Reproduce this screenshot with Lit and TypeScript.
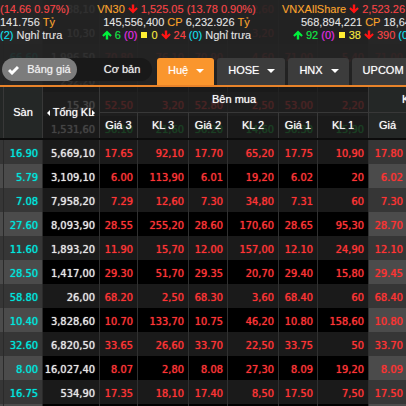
import { LitElement, html, css, svg } from "lit";
import { customElement, state } from "lit/decorators.js";

type Row = string[];

// Rows that have scrolled beneath the translucent header.
const scrolled: { tone: string; cells: Row }[] = [
  { tone: "down", cells: ["", "88,10", "", "", "", "2,60", "", "", ""] },
  { tone: "down", cells: ["", "10,30", "", "", "", "3,20", "", "", ""] },
  { tone: "down", cells: ["66.60", "1,996,50", "70.80", "76,10", "70.90", "4,60", "71.00", "5,40", "71.00"] },
  { tone: "down", cells: ["", "292,20", "", "", "", "", "", "", ""] },
  { tone: "down", cells: ["49.00", "15,30", "52.50", "3,20", "52.80", "2,50", "53.00", "2,20", ""] },
  { tone: "up", cells: ["", "1,531,60", "56.10", "21,60", "56.20", "14,60", "56.30", "15,90", ""] },
];

const quotes: Row[] = [
  ["16.90", "5,669,10", "17.65", "92,10", "17.70", "65,20", "17.75", "10,90", "17.80"],
  ["5.79", "3,109,10", "6.00", "113,90", "6.01", "19,20", "6.02", "20", "6.02"],
  ["7.08", "7,958,20", "7.29", "12,60", "7.30", "34,80", "7.31", "60", "7.30"],
  ["27.60", "8,093,90", "28.55", "255,20", "28.60", "170,60", "28.65", "95,30", "28.70"],
  ["11.60", "1,893,20", "11.90", "15,70", "12.00", "157,00", "12.10", "24,90", "12.10"],
  ["28.50", "1,417,00", "29.30", "51,70", "29.35", "20,70", "29.40", "15,80", "29.45"],
  ["58.80", "26,00", "68.20", "2,50", "68.30", "3,60", "68.40", "60", "68.40"],
  ["10.40", "3,828,60", "10.70", "133,70", "10.75", "46,20", "10.80", "158,60", "10.80"],
  ["32.60", "6,820,50", "33.65", "26,60", "33.70", "22,50", "33.75", "50", "33.70"],
  ["8.00", "16,027,40", "8.07", "2,80", "8.08", "27,30", "8.09", "19,20", "8.09"],
  ["16.75", "534,90", "17.35", "18,10", "17.40", "8,50", "17.50", "7,50", "17.50"],
  ["", "", "", "", "", "", "", "", ""],
];

const arrow = (dir: "up" | "down") => html`<svg class="arrow ${dir}" viewBox="0 0 10 10" aria-hidden="true">
  ${dir === "up"
    ? svg`<path d="M5 0.4 9.8 5.2 8.4 6.8 6.2 4.8V9.6H3.8V4.8L1.6 6.8 0.2 5.2Z" />`
    : svg`<path d="M5 9.6 9.8 4.8 8.4 3.2 6.2 5.2V0.4H3.8V5.2L1.6 3.2 0.2 4.8Z" />`}
</svg>`;

const columns = html`<colgroup>
  <col class="c-edge" /><col class="c-floor" /><col class="c-total" />
  <col class="c-price3" /><col class="c-vol" /><col class="c-price" /><col class="c-vol" />
  <col class="c-price" /><col class="c-vol" /><col class="c-match" />
</colgroup>`;

@customElement("app-root")
export class AppRoot extends LitElement {
  @state() private view = "full";
  @state() private market = "Huệ";

  static styles = css`
    :host {
      display: block;
      position: relative;
      height: 100vh;
      overflow: hidden;
      background: #000;
      color: #e6e6e6;
      font: 11px/13px "Liberation Sans", Arial, sans-serif;
    }
    * { box-sizing: border-box; }
    table {
      width: 100%;
      table-layout: fixed;
      border-collapse: separate;
      border-spacing: 0;
    }
    .c-edge { width: 4px; }
    .c-floor, .c-price { width: 39px; }
    .c-total { width: 57px; }
    .c-price3 { width: 38px; }
    .c-vol { width: 51px; }
    .c-match { width: 37px; }

    .quotes {
      margin-top: -4px;
      font-family: "DejaVu Sans Condensed", "DejaVu Sans", sans-serif;
      text-shadow: 0 0 1px currentColor;
    }
    .quotes td {
      height: 24px;
      padding: 2px 4px 0 0;
      text-align: right;
      white-space: nowrap;
      color: #ff3434;
      border-right: 1px solid #303030;
    }
    .quotes tr:nth-child(odd) td { background: #1a1a1a; }
    .quotes tr:nth-child(even) td { background: #000; }
    .quotes tr:nth-child(odd) .tint { background: #363636; }
    .quotes tr:nth-child(even) .tint { background: #4b4b4b; }
    .quotes td.tint { border-right-color: #2a2a2a; }
    .quotes .floor { color: #00e5dc; }
    .quotes .total { color: #e8e8e8; }
    .quotes .match { padding-right: 3px; border-right: 0; }
    .quotes .up td { color: #00c832; }
    .quotes .up .total { color: #e8e8e8; }

    .header {
      position: absolute;
      inset: 0 0 auto;
    }
    .top { background: rgba(36, 36, 36, 0.94); }
    .indices {
      display: grid;
      grid-template-columns: 94px 165px 1fr;
      padding-top: 2px;
      white-space: nowrap;
      overflow: hidden;
    }
    .index { min-width: 0; }
    .index p {
      display: flex;
      gap: 3px;
      margin: 0;
      line-height: 14px;
      height: 13px;
      align-items: center;
      text-shadow: 0 0 1px rgba(255, 255, 255, 0.2);
    }
    .index.centred p { justify-content: center; }
    .index.last { padding-left: 23px; }
    .index.last p:nth-child(2) { padding-left: 19px; }
    .index.last p:nth-child(3) { padding-left: 11px; }
    .name { color: #ffa01e; }
    .red { color: #ff3b3b; }
    .green { color: #00f03c; }
    .pink { color: #f01ef0; }
    .cyan { color: #00e1f5; }
    .yellow { color: #ffee32; }
    .arrow { width: 10px; height: 10px; flex: none; }
    .arrow.up { fill: #00f03c; }
    .arrow.down { fill: #ff1414; }
    .dot {
      width: 6px;
      height: 6px;
      margin: 0 1px;
      background: #ffee32;
      flex: none;
    }

    .bar {
      display: flex;
      align-items: flex-end;
      padding-top: 17px;
      border-bottom: 2px solid #e8832a;
      overflow: hidden;
    }
    button {
      display: flex;
      align-items: center;
      justify-content: center;
      border: 0;
      padding: 0;
      background: none;
      color: #f0f0f0;
      font: inherit;
      white-space: nowrap;
      text-shadow: 0 0 1px rgba(255, 255, 255, 0.6);
      cursor: pointer;
    }
    .views {
      display: flex;
      flex: none;
      align-self: flex-start;
      width: 150px;
      margin: 0 5px 4px 2px;
      border-radius: 12px;
      background: #191919;
    }
    .views button {
      width: 50%;
      height: 23px;
      border-radius: 12px;
      gap: 8px;
      padding-left: 15px;
    }
    .views button.on { background: #7c7c7c; padding: 0; }
    .check { width: 11px; height: 10px; fill: none; stroke: #fff; stroke-width: 3; }
    .markets { display: flex; gap: 3px; }
    .markets button {
      height: 27px;
      padding: 0 10px 2px 11px;
      gap: 8px;
      border-radius: 3px 3px 0 0;
      background: #3c3c3c;
      color: #fff;
      flex: none;
    }
    .markets button.on { background: #fa962d; }
    .caret {
      border: 4px solid transparent;
      border-top-color: #fff;
      border-bottom: 0;
    }

    .heads th {
      padding: 0;
      font-weight: normal;
      color: #fff;
      white-space: nowrap;
      text-shadow: 0 0 1px rgba(255, 255, 255, 0.7);
      border-right: 1px solid #383838;
      text-align: center;
    }
    .heads {
      border-bottom: 2px solid #0c0c0c;
      background: rgba(32, 32, 32, 0.82);
    }
    .heads tr:first-child th { height: 25px; }
    .heads tr:last-child th { height: 26px; border-top: 1px solid #383838; }
    .heads th:last-child { border-right: 0; overflow: hidden; }
    .heads .tint { background: #242726; }
    .sort {
      display: flex;
      align-items: center;
      justify-content: center;
      gap: 3px;
    }
    .left, .right {
      border: 3px solid transparent;
      border-left-width: 0;
      border-right-color: #fff;
    }
    .right {
      border-width: 3px 0 3px 3px;
      border-right-color: transparent;
      border-left-color: #fff;
      margin-left: -5px;
    }
    .heads tr:first-child .cut { padding-left: 33px; text-align: left; }
  `;

  private cells(row: Row) {
    const kinds = ["tint floor", "total", "", "", "", "", "", "", "tint match"];
    return html`<td class="tint"></td>${row.map((v, i) => html`<td class=${kinds[i]}>${v}</td>`)}`;
  }

  private viewButton(id: string, label: string) {
    const on = this.view === id;
    return html`<button class=${on ? "on" : ""} aria-pressed=${on} @click=${() => (this.view = id)}>
      ${on ? html`<svg class="check" viewBox="0 0 11 10" aria-hidden="true"><path d="M1 5 4 8 10 2" /></svg>` : ""}
      <span>${label}</span>
    </button>`;
  }

  render() {
    return html`
      <table class="quotes" aria-label="Bảng giá">
        ${columns}
        <tbody>
          ${scrolled.map((r) => html`<tr class=${r.tone} aria-hidden="true">${this.cells(r.cells)}</tr>`)}
          ${quotes.map((r) => html`<tr>${this.cells(r)}</tr>`)}
        </tbody>
      </table>

      <header class="header">
        <div class="top">
          <div class="indices">
            <div class="index">
              <p><span class="red">(14.66 0.97%)</span></p>
              <p><span>141.756</span><span class="name">Tỷ</span></p>
              <p><span class="cyan">(2)</span><span>Nghỉ trưa</span></p>
            </div>
            <div class="index centred">
              <p><span class="name">VN30</span>${arrow("down")}<span class="red">1,525.05 (13.78 0.90%)</span></p>
              <p><span>145,556,400</span><span class="name">CP</span><span>6,232.926</span><span class="name">Tỷ</span></p>
              <p>
                ${arrow("up")}<span class="green">6</span><span class="pink">(0)</span><i class="dot"></i
                ><span class="yellow">0</span>${arrow("down")}<span class="red">24</span
                ><span class="cyan">(0)</span><span>Nghỉ trưa</span>
              </p>
            </div>
            <div class="index last">
              <p><span class="name">VNXAllShare</span>${arrow("down")}<span class="red">2,523.26 (</span></p>
              <p><span>568,894,221</span><span class="name">CP</span><span>18,64</span></p>
              <p>
                ${arrow("up")}<span class="green">92</span><span class="pink">(0)</span><i class="dot"></i
                ><span class="yellow">38</span>${arrow("down")}<span class="red">390</span
                ><span class="cyan">(0</span>
              </p>
            </div>
          </div>

          <nav class="bar">
            <div class="views">
              ${this.viewButton("full", "Bảng giá")} ${this.viewButton("basic", "Cơ bản")}
            </div>
            <div class="markets">
              ${["Huệ", "HOSE", "HNX", "UPCOM"].map(
                (m) => html`<button class=${m === this.market ? "on" : ""} @click=${() => (this.market = m)}>
                  <span>${m}</span><i class="caret"></i>
                </button>`
              )}
            </div>
          </nav>
        </div>

        <table class="heads">
          ${columns}
          <thead>
            <tr>
              <th rowspan="2" class="tint"></th>
              <th rowspan="2" class="tint">Sàn</th>
              <th rowspan="2"><div class="sort"><i class="left"></i><span>Tổng KL</span><i class="right"></i></div></th>
              <th colspan="6">Bên mua</th>
              <th class="tint cut">K</th>
            </tr>
            <tr>
              <th>Giá 3</th><th>KL 3</th><th>Giá 2</th><th>KL 2</th><th>Giá 1</th><th>KL 1</th>
              <th class="tint">Giá</th>
            </tr>
          </thead>
        </table>
      </header>
    `;
  }
}
